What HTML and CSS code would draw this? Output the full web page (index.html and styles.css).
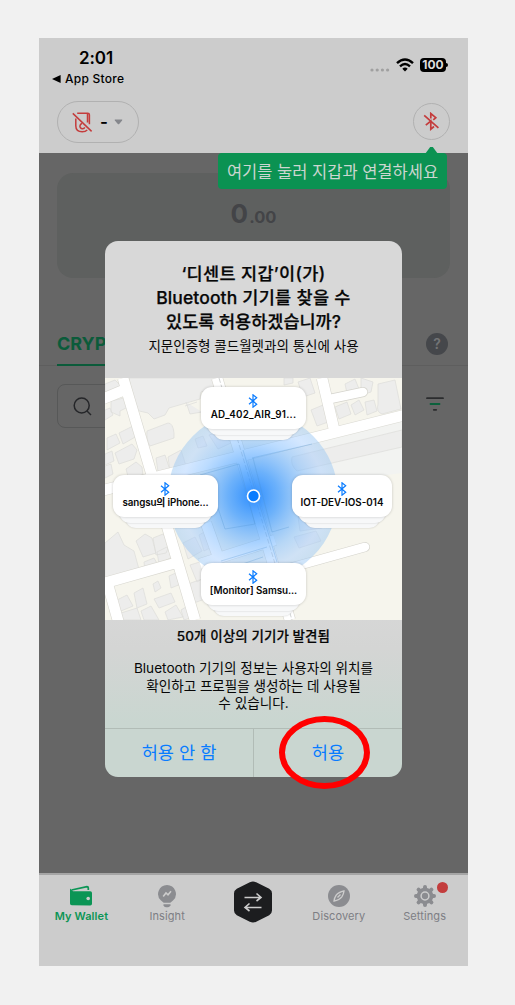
FILE: index.html
```html
<!DOCTYPE html>
<html lang="ko">
<head>
<meta charset="utf-8">
<title>My Wallet</title>
<link rel="stylesheet" href="styles.css">
</head>
<body>
<svg class="defs" width="0" height="0" aria-hidden="true">
  <symbol id="bt" viewBox="0 0 10 14"><path d="M1 3.7 8.7 10.2 5 13.2V.8L8.7 3.8 1 10.3" fill="none" stroke="#0a7cff" stroke-width="1.2"/></symbol>
</svg>
<main class="phone">
  <header class="top">
    <div class="status">
      <div class="clock"><div class="time">2:01</div><div class="back"><svg width="9" height="8" viewBox="0 0 9 8"><path d="M8.6 0v8L0 4z"/></svg>App Store</div></div>
      <div class="signals">
        <svg class="dots" width="20" height="4" viewBox="0 0 20 4" fill="#a0a0a0"><circle cx="2" cy="2" r="1.6"/><circle cx="7.2" cy="2" r="1.6"/><circle cx="12.4" cy="2" r="1.6"/><circle cx="17.6" cy="2" r="1.6"/></svg>
        <svg width="18" height="14" viewBox="0 0 18 14" fill="none" stroke="#000" stroke-width="2.4"><path d="M1 5.2Q9-2.4 17 5.2M4 8.4q5-4.6 10 0"/><path d="M6.3 10.7Q9 8.4 11.7 10.7L9 13.5z" fill="#000" stroke="none"/></svg>
        <div class="battery">100</div>
      </div>
    </div>
    <div class="toolbar">
      <div class="device">
        <svg width="21" height="21" viewBox="0 0 21 21" fill="none" stroke="#c43c3c" stroke-width="1.5"><path d="M5.2 1.2h10.6q1.6 0 1.6 1.6v9.500M3.800 6.500v7.200q0 6 6.400 6 3.400 0 5-1.800M15.500 2v8.500"/><path d="M10 11.600a2.600 2.600 0 1 0 2.800 3.800"/><path d="m.8 1.4 18.8 18"/></svg>
        <span class="dash">-</span>
        <svg width="9" height="6" viewBox="0 0 9 6"><path d="M1.2.5h6.6q1 0 .3.9L5.2 5q-.7.7-1.4 0L.9 1.4Q.2.5 1.200.5z" fill="#85878c"/></svg>
      </div>
      <div class="link">
        <svg width="17" height="19" viewBox="0 0 17 19" fill="none" stroke="#c43c3c" stroke-width="1.7"><path d="M7.8 6.5V1.5l5 4.2-2.5 2.2M2.8 13.200 7.800 9v8.200l3.200-2.700M1.200 3.300 15.400 15.800"/></svg>
      </div>
    </div>
  </header>
  <div class="tooltip">여기를 눌러 지갑과 연결하세요</div>

  <section class="content">
    <div class="balance"><span class="whole">0</span><span class="fraction">.00</span></div>
    <div class="tabs"><span class="tab">CRYPTO</span><span class="help">?</span></div>
    <div class="tools">
      <div class="search"><svg width="19" height="19" viewBox="0 0 19 19" fill="none" stroke="#252629" stroke-width="1.5"><circle cx="8.7" cy="8.5" r="7.5"/><path d="m14 14 4 4"/></svg></div>
      <svg class="filter" width="18" height="14" viewBox="0 0 18 14" fill="none" stroke="#2b2c2e" stroke-width="1.8" stroke-linecap="round"><path d="M1 1.200h16M7.800 12.800h2.400"/><path d="M4.500 7h9" stroke="#0b613c"/></svg>
    </div>
  </section>

  <nav class="nav">
    <div class="item active">
      <svg width="24" height="22" viewBox="0 0 24 22"><path d="m2.500 5 15.500-3.300q1.300 0 1.300 1.300v2" fill="none" stroke="#0b9555" stroke-width="1.700"/><path d="M1 3.500 4 6.200h17.300q1.700 0 1.700 1.800v10.800q0 1.800-1.700 1.800L2.800 20.200Q1 20 1 18.500z" fill="#0b9555"/><circle cx="19.200" cy="13.500" r="1.800" fill="#ccc"/></svg>
      <span>My Wallet</span>
    </div>
    <div class="item">
      <svg width="20" height="24" viewBox="0 0 20 24"><path d="M10 1a9 9 0 0 1 6 15.600l-2.700 2.100H6.700L4 16.600A9 9 0 0 1 10 1z" fill="#8b8c90"/><path d="M6.200 12.400 9 9l2 1.800 3-3.500" fill="none" stroke="#ccc" stroke-width="1.600"/><path d="M6.500 20.300h7v1q-1 2-2.500 2H9q-2 0-2.500-2z" fill="#8b8c90"/></svg>
      <span>Insight</span>
    </div>
    <div class="item">
      <svg class="swap" width="40" height="42" viewBox="0 0 40 42"><path d="m16.800 1.300-13 6.500Q1 9.500 1 12.500v17q0 3 2.800 4.700l13 6.500q3.200 1.400 6.400 0l13-6.500Q39 32.500 39 29.500v-17q0-3-2.800-4.700l-13-6.500q-3.200-1.400-6.400 0z" fill="#1c1d1f"/><path d="M11.500 16.500h16M23.500 12.500l4.500 4-4.500 3.500M28.500 26.500h-16M16.500 22.500l-4.500 4 4.500 3.500" fill="none" stroke="#ccc" stroke-width="1.600"/></svg>
    </div>
    <div class="item">
      <svg width="24" height="24" viewBox="0 0 24 24"><circle cx="12" cy="12" r="11" fill="#8b8c90"/><path d="M17 7q-5.500 1-7.800 4.200Q7.300 14 7 17q5.500-1 7.800-4.200Q16.700 10 17 7zM10.500 13.500l3-3" fill="none" stroke="#ccc" stroke-width="1.400"/></svg>
      <span>Discovery</span>
    </div>
    <div class="item">
      <svg width="24" height="24" viewBox="0 0 24 24"><circle cx="12" cy="12" r="8.300" fill="#8b8c90"/><g stroke="#8b8c90" stroke-width="4" stroke-linecap="round"><path d="M12 3v18M3 12h18M5.600 5.600l12.800 12.800M18.400 5.600 5.600 18.400"/></g><circle cx="12" cy="12" r="3.900" fill="none" stroke="#ccc" stroke-width="1.500"/></svg>
      <span>Settings</span><i class="dot"></i>
    </div>
  </nav>

  <section class="dialog">
    <div class="question">
      <h1><span class="q1">‘디센트 지갑’이(가)</span><span class="q2"><em>Bluetooth</em> 기기를 찾을 수</span><span class="q3">있도록 허용하겠습니까?</span></h1>
      <p>지문인증형 콜드월렛과의 통신에 사용</p>
    </div>
    <div class="map">
      <svg class="streets" width="297" height="242" viewBox="0 0 297 242">
        <defs>
          <radialGradient id="glow"><stop offset="0" stop-color="#2388ff" stop-opacity=".95"/><stop offset=".3" stop-color="#3f9bff" stop-opacity=".75"/><stop offset=".65" stop-color="#78b9ff" stop-opacity=".5"/><stop offset=".85" stop-color="#a0caff" stop-opacity=".45"/><stop offset="1" stop-color="#9cc8f2" stop-opacity=".5"/></radialGradient>
        </defs>
        <path fill="#f6f5ed" d="M0 0h297v242H0z"/>
        <path fill="#f2f3f1" d="m160 72 137-32v55l-150 20z"/>
        <g fill="#ededec" stroke="#dcddda" stroke-width=".7" stroke-linejoin="round">
          <path d="M24 0h92l-1 8-19 6-1 7-31 9-4 7-11 4-6-6-13-3z"/>
          <path d="M0 6 10 2l6 6-1 6-15 5zM6 23l17-4v10l-8 4v5l-9-4zM0 32l5-2 3 7-8 5z"/>
          <path d="m42 53 21-8q5 0 6 10v5l-24 8q-4-6-3-15zM51 80l9-3 6 18-1 8-10 4zM80 28l12-4M81 24l4 12 12-2"/>
          <path d="m14 55 14-7 4 10-14 8zM2 60l9-4 4 9-13 7zM10 75l17-9 5 6-3 9-15 5zM0 76l7-3 2 10-9 4zM21 91l10-7 6 5 1 9-14 4zM0 88l6-2 2 10-8 4z"/>
          <path d="m63 79 13-7 5 16-16 5zM90 61l8-3 4 10-9 2zM104 57l12-4 10 12-13 6z"/>
          <path d="m0 165 13-11 6 13 10 6 6 22q-8 7-35 13zM31 163l9-7 7 4 4 15-13 4zM48 160l10-4 7 10-4 9-10 2zM39 184l10-4 4 7-13 6zM52 174l10-5 5 10-13 7z"/>
          <path d="m10 223 12-6 6 11-12 5zM29 215l9-5 4 16-10 4zM48 206l5-3 3 7-6 4zM64 198l9-4 3 12-10 4zM49 221l17-6 4 9-16 6zM16 235l16-5 4 12H17zM36 233l10-5 8 14H39zM60 234l11-7 7 12-15 3zM76 232l8-5 5 12-10 3z"/>
          <path d="m78 165 12-6 7 14-14 8zM94 157l9-5 6 16-10 5zM85 187l13-4 6 14-12 7zM83 206l14-5 8 18-16 6z"/>
          <path d="m240 6 10-5 4 10-12 4zM256 0l12 4-2 10-10 3zM273 6l17-4 6 29-19 5q-6-2-4-10zM206 32l12-5 8 16-14 5zM230 29l12-5 4 12-12 5zM246 27l8-5 5 10-9 5zM260 24l9-2 3 11-10 4zM193 4l12-4 5 15-12 4zM179 0h9v5l-9 2z"/>
          <path d="m187 79 110-27v17L192 93q-7-6-5-14z"/>
          <path d="m193 139 21 2 3 9-22 3zM189 159l22-6 5 10-22 7z"/>
        </g>
        <g fill="none" stroke="#d9d8d1" stroke-width="11.800">
          <path d="m18 0 72 242M-5 22 24 10M-4 206l78-22M3 207l11 39M112 0l73 242M-5 113l137-34 168-42M217 0l12 51M101 145l14 39M95 186l75-24"/>
        </g>
        <path d="m225 21 33-7M260 169l-79 22" fill="none" stroke="#d5d4cd" stroke-width="10" stroke-linecap="round"/>
        <g fill="none" stroke="#fff" stroke-width="10.600">
          <path d="m18 0 72 242M-5 22 24 10M-4 206l78-22M3 207l11 39M112 0l73 242M-5 113l137-34 168-42M217 0l12 51M101 145l14 39M95 186l75-24"/>
        </g>
        <path d="m225 21 33-7M260 169l-79 22" fill="none" stroke="#fff" stroke-width="8.600" stroke-linecap="round"/>
        <g fill="none" stroke="#c7c9c9" stroke-width=".8"><path d="m114 0 73 242" stroke-dasharray="5 2"/></g>
        <circle cx="148" cy="118" r="85" fill="url(#glow)"/>
        <g fill="none" stroke="#4d8fce" stroke-width=".7" opacity=".4"><path d="m95 97 39-11 16 60-30 5-18-54M147 80l60-14M148 80l19 74 17-5M116 183l46-14M120 192l38-13M138 72l34 112"/></g>
        <circle cx="148.500" cy="118" r="6" fill="#087cff" stroke="#fff" stroke-width="1.700"/>
      </svg>
      <div class="card north"><div class="face"><svg width="10" height="14"><use href="#bt"/></svg><b>AD_402_AIR_91...</b></div></div>
      <div class="card west"><div class="face"><svg width="10" height="14"><use href="#bt"/></svg><b>sangsu의 iPhone...</b></div></div>
      <div class="card east"><div class="face"><svg width="10" height="14"><use href="#bt"/></svg><b>IOT-DEV-IOS-014</b></div></div>
      <div class="card south"><div class="face"><svg width="10" height="14"><use href="#bt"/></svg><b>[Monitor] Samsu...</b></div></div>
    </div>
    <div class="details">
      <h2>50개 이상의 기기가 발견됨</h2>
      <p><span class="d1">Bluetooth 기기의 정보는 사용자의 위치를</span><span class="d2">확인하고 프로필을 생성하는 데 사용될</span><span class="d3">수 있습니다.</span></p>
    </div>
    <div class="actions"><div class="deny">허용 안 함</div><div class="allow">허용</div></div>
  </section>
  <div class="highlight"></div>
</main>
</body>
</html>
```

FILE: styles.css
```css
* { box-sizing: border-box; }
body { margin: 0; padding: 38px 0 0 39px; height: 1005px; background: #f1f1f1; overflow: hidden; font-family: Inter, "Noto Sans CJK KR", sans-serif; }
.defs { position: absolute; }
.phone { position: relative; width: 429px; height: 928px; display: flex; flex-direction: column; background: #666; }
.top { height: 115px; background: #ccc; padding: 10px 18px 0; }
.status { display: flex; justify-content: space-between; height: 53px; }
.clock { margin-left: -5px; }
.time { font-weight: 600; font-size: 17px; line-height: 20px; padding-left: 27px; letter-spacing: -.1px; }
.back { display: flex; align-items: center; gap: 4px; font-weight: 500; font-size: 12px; line-height: 15px; letter-spacing: .25px; margin-top: 3px; }
.signals { display: flex; align-items: center; height: 34px; gap: 6px; margin-right: 4px; }
.dots { margin-top: 10px; }
.battery { position: relative; width: 26px; height: 14px; border-radius: 4px; background: #000; color: #ddd; font-weight: 700; font-size: 12px; line-height: 14px; text-align: center; }
.battery::after { content: ""; position: absolute; left: 26px; top: 5px; width: 2px; height: 4px; border-radius: 0 2px 2px 0; background: #000; }
.toolbar { display: flex; justify-content: space-between; }
.device { display: flex; align-items: center; width: 82px; height: 42px; border: 1px solid #b1b1b1; border-radius: 21px; padding-left: 14px; }
.dash { font-weight: 600; font-size: 17px; margin: 0 6px 0 7px; }
.link { width: 37px; height: 37px; margin-top: 2px; border: 1px solid #b1b1b1; border-radius: 50%; display: grid; place-items: center; }
.tooltip { position: absolute; left: 179px; top: 115px; width: 229px; height: 36px; border-radius: 4px; background: #0b9252; color: #ccd6d0; font: 400 16.500px/36px "Noto Sans CJK KR", sans-serif; text-align: center; }
.tooltip::before { content: ""; position: absolute; right: 9px; top: -6px; width: 13px; height: 7px; background: #0b9252; clip-path: polygon(40% 0, 60% 0, 100% 100%, 0 100%); }
.content { flex: 1; }
.balance { margin: 20px 18px 0; height: 105px; border-radius: 16px; background: #5e605f; color: #434447; font-weight: 700; text-align: center; line-height: 82px; }
.whole { font-size: 26px; }
.fraction { font-size: 16.500px; margin-left: 1px; }
.tabs { display: flex; justify-content: space-between; align-items: center; height: 43px; margin-top: 45px; padding: 0 19px 0 18px; border-bottom: 1px solid #5e5e5e; }
.tab { height: 43px; line-height: 41px; font-size: 18px; font-weight: 700; color: #0b5b3a; border-bottom: 2px solid #0b5b3a; }
.help { width: 22px; height: 22px; border-radius: 50%; background: #45474b; color: #737476; font-size: 14px; font-weight: 600; line-height: 22px; text-align: center; margin-right: 1px; }
.tools { display: flex; align-items: center; justify-content: space-between; padding: 18px 24px 10px 18px; }
.filter { margin-top: -4px; }
.search { width: 300px; height: 44px; border: 1px solid #575858; border-radius: 8px; display: flex; align-items: center; padding-left: 15px; }
.nav { height: 93px; display: grid; grid-template-columns: repeat(5, 1fr); background: #ccc; border-top: 2px solid #a5a5a5; }
.item { position: relative; display: flex; flex-direction: column; align-items: center; padding-top: 9px; color: #7d7e84; font-size: 11px; line-height: 15px; letter-spacing: .1px; }
.item svg { height: 24px; margin-right: 1px; }
.item .swap { height: 42px; margin-top: -3px; margin-right: 0; }
.item span { margin-top: 1px; margin-right: 1px; }
.active { color: #0b9555; font-weight: 600; }
.dot { position: absolute; left: 55px; top: 7px; width: 11px; height: 11px; border-radius: 50%; background: #c33d3d; }
.dialog { position: absolute; left: 66px; top: 203px; width: 297px; height: 536px; border-radius: 13px; overflow: hidden; background: linear-gradient(#d8d8d8 65%, #d4d5d4 76%, #c9d6d0 90%); color: #070707; }
.question { height: 137px; padding-top: 21px; text-align: center; }
h1, h2, p { margin: 0; }
h1 { font-size: 17.500px; font-weight: 500; line-height: 24px; -webkit-text-stroke: .25px #070707; }
h1 em { font-style: normal; letter-spacing: .1px; }
h1 span, .details p span { display: block; white-space: nowrap; }
.q1 { letter-spacing: .35px; }
.q2 { letter-spacing: .32px; }
.question p { font-size: 13.500px; line-height: 24px; }
.map { position: relative; height: 242px; }
.streets { display: block; }
.card { position: absolute; width: 105px; height: 42px; }
.card::before, .card::after { content: ""; position: absolute; background: #f7f8f9; border-radius: 11px; box-shadow: 0 0 2px #0003; }
.card::before { left: 12px; right: 12px; top: 12px; bottom: -11px; }
.card::after { left: 6px; right: 6px; top: 12px; bottom: -6px; }
.face { position: relative; z-index: 1; height: 42px; display: flex; flex-direction: column; align-items: center; border-radius: 11px; background: #fff; padding-top: 7px; box-shadow: 0 0 3px #0003; }
.face svg { margin-right: 1px; }
.face b { font-size: 9.800px; font-weight: 600; line-height: 14px; white-space: nowrap; }
.north { left: 96px; top: 9px; letter-spacing: .25px; }
.west { left: 8px; top: 97px; letter-spacing: -.12px; }
.east { left: 187px; top: 97px; width: 100px; }
.south { left: 96px; top: 185px; letter-spacing: -.05px; }
.details { height: 108px; padding-top: 6px; text-align: center; }
h2 { font-size: 13.500px; line-height: 20px; font-weight: 500; letter-spacing: .08px; -webkit-text-stroke: .2px #070707; }
.details p { font-size: 13.600px; line-height: 17.500px; margin-top: 14px; }
.d2 { letter-spacing: -.05px; }
.actions { display: grid; grid-template-columns: 148px 1fr; height: 49px; border-top: 1px solid #b1bcb6; color: #087cff; font-size: 17.600px; line-height: 47px; text-align: center; }
.allow { border-left: 1px solid #b1bcb6; }
.highlight { position: absolute; left: 240px; top: 678px; width: 91px; height: 73px; border: 6px solid #f00; border-radius: 50%; }
```
